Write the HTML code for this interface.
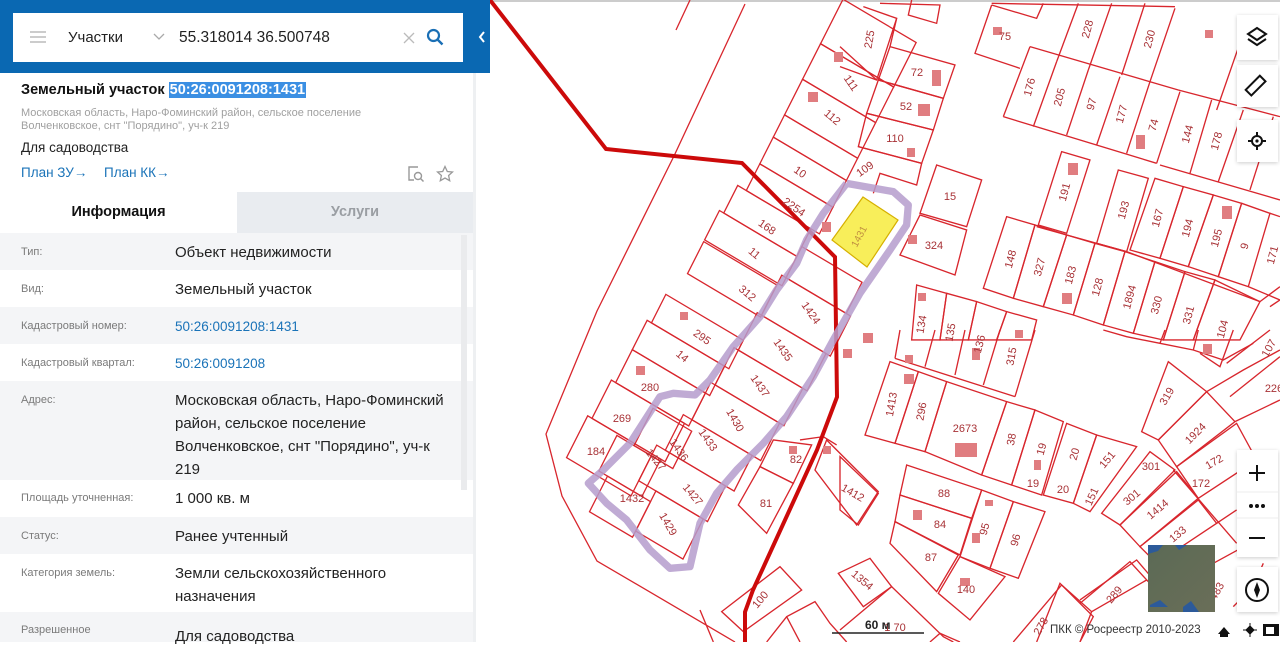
<!DOCTYPE html>
<html><head><meta charset="utf-8"><style>
*{margin:0;padding:0;box-sizing:border-box}
body{width:1280px;height:642px;overflow:hidden;background:#fff;font-family:"Liberation Sans","DejaVu Sans",sans-serif;position:relative}
#map{position:absolute;left:0;top:0;width:1280px;height:642px}
#panel{position:absolute;left:0;top:0;width:476px;height:642px;background:#fff;border-right:3px solid #eef0f2}
#hdr{position:absolute;left:0;top:0;width:490px;height:73px;background:#0a68b2}
#sb{position:absolute;left:13px;top:13px;width:450px;height:49px;background:#fff}
.abs{position:absolute;white-space:nowrap}
.row{position:absolute;left:0;width:473px}
.lab{position:absolute;left:21px;font-size:11px;color:#7a7a7a}
.val{position:absolute;left:175px;font-size:15px;color:#222;line-height:23px}
.g{background:#f4f5f7}
.lnk{color:#1a73b8}
.ctl{position:absolute;left:1237px;width:41px;background:#fff;box-shadow:0 1px 4px rgba(0,0,0,.2)}
</style></head><body>
<svg id="map" viewBox="0 0 1280 642" xmlns="http://www.w3.org/2000/svg">
<rect x="0" y="0" width="1280" height="2" fill="#ccc"/>
<g fill="none" stroke="#d8262d" stroke-width="1.3">
<polyline points="745,4 674,156 597,311 546,434 562,496 597,561 735,642"/>
<polyline points="690,0 676,30"/>
<g transform="translate(840,0) scale(0.3333)" stroke-width="4">
<polyline points="455,15 405,160 540,205"/><polyline points="455,15 590,55 610,10"/>
<polyline points="455,10 1005,20"/>
<line x1="715" y1="10" x2="650" y2="185"/><line x1="815" y1="10" x2="745" y2="210"/><line x1="915" y1="10" x2="845" y2="225"/><line x1="1005" y1="25" x2="930" y2="245"/>
<polyline points="570,140 1015,270 1320,350"/><polyline points="490,350 950,490"/><polyline points="960,495 1320,600"/>
<line x1="570" y1="140" x2="490" y2="350"/><line x1="650" y1="185" x2="580" y2="380"/><line x1="745" y1="210" x2="680" y2="405"/><line x1="840" y1="230" x2="770" y2="435"/><line x1="930" y1="245" x2="860" y2="460"/><line x1="1020" y1="275" x2="950" y2="490"/><line x1="1115" y1="300" x2="1050" y2="520"/><line x1="1210" y1="330" x2="1135" y2="545"/><line x1="1300" y1="350" x2="1230" y2="570"/>
<line x1="1210" y1="100" x2="1130" y2="330"/>
<polygon points="665,455 750,480 680,700 595,675"/>
<polygon points="835,510 925,535 860,755 770,730"/><polygon points="945,535 1030,560 960,775 870,750"/><polygon points="1030,560 1120,585 1045,800 960,775"/><polygon points="1120,585 1205,610 1135,830 1045,800"/><polygon points="1205,610 1290,640 1225,860 1135,830"/><polyline points="1290,640 1320,650"/><polyline points="1320,900 1225,860"/>
<polygon points="500,650 585,675 520,895 430,865"/><polygon points="585,675 680,705 610,920 520,895"/><polygon points="680,705 765,730 700,945 610,920"/><polygon points="765,730 855,755 790,975 700,945"/><polygon points="855,755 945,785 880,1000 790,975"/><polygon points="945,785 1035,815 970,1020 880,1000"/><polygon points="1035,815 1125,840 1060,1020 970,1020"/><polygon points="1125,840 1260,905 1200,1020 1060,1020"/>
<polyline points="590,680 860,755 1260,905"/><polyline points="1260,905 1320,860"/><polyline points="1290,920 1320,900"/>
<polygon points="290,495 425,540 380,680 240,640"/><polygon points="240,645 380,690 345,825 180,765"/>
<polygon points="150,140 345,195 310,295 115,240"/><polygon points="115,240 310,295 280,390 80,340"/><polygon points="80,340 280,390 245,490 55,440"/><polyline points="55,440 245,490 230,555 120,520 100,580"/>
<polyline points="70,20 170,55 110,240 0,200"/><polyline points="170,55 150,140"/><polyline points="0,140 110,240"/><polyline points="120,10 300,15 290,70 205,45 215,0"/>
<polygon points="230,855 320,880 300,1020 215,1020"/><polygon points="320,880 410,905 385,1020 300,1020"/><polygon points="410,905 500,935 470,1020 385,1020"/><polygon points="500,935 590,960 575,1020 470,1020"/>
</g>
<g transform="translate(840,330) scale(0.3333)" stroke-width="4">
<line x1="180" y1="0" x2="165" y2="85"/><line x1="285" y1="0" x2="255" y2="110"/><line x1="375" y1="0" x2="345" y2="135"/><line x1="480" y1="0" x2="430" y2="165"/><line x1="585" y1="0" x2="525" y2="200"/><polyline points="165,85 525,200"/>
<polygon points="150,95 235,125 165,340 75,315"/><polygon points="235,125 320,155 255,365 165,340"/><polygon points="320,155 500,215 425,435 255,365"/><polygon points="500,215 585,240 515,465 425,435"/><polygon points="585,240 670,275 605,495 515,465"/><polygon points="680,280 770,315 700,520 610,495"/><polygon points="770,315 890,350 750,545 700,520"/>
<polygon points="200,405 425,480 395,565 180,495"/><polygon points="180,495 395,565 360,675 165,575"/><polygon points="165,575 355,675 290,785 150,640"/><polygon points="425,480 520,515 450,715 360,680"/><polygon points="520,515 615,545 535,745 450,715"/><polygon points="360,680 495,740 390,870 295,790"/>
<polygon points="0,380 115,490 55,585 0,540"/>
<polygon points="985,95 1100,185 955,330 905,305"/><polygon points="955,330 1100,185 1185,275 1010,410"/><polygon points="930,365 1005,420 840,585 785,550"/><polygon points="840,585 1010,425 1075,505 900,650"/><polygon points="900,650 1075,510 1130,580 950,700"/><polygon points="1010,410 1190,280 1250,390 1075,505"/><polyline points="1100,185 1210,120 1320,60"/><polyline points="1160,100 1290,0"/><polyline points="1170,200 1320,80"/><polyline points="1185,275 1320,210"/><polyline points="1000,420 1190,640"/><polyline points="1130,580 1190,540"/>
<polyline points="790,0 860,20 960,40 1060,60 1150,90 1240,40"/><polyline points="960,40 975,0"/><polyline points="1060,60 1075,0"/><polyline points="1080,70 1140,110 1180,0"/>
<polyline points="1270,700 1240,770"/><polyline points="1120,700 1230,640"/><polyline points="1180,830 1230,780"/>
<polyline points="720,810 890,690 950,760"/><polyline points="590,936 660,760 760,860 720,936"/>
</g>
<g transform="translate(700,540) scale(0.3333)" stroke-width="4">
<polygon points="65,215 240,80 305,150 130,275"/><polygon points="415,100 510,55 575,140 490,200"/><polyline points="420,270 575,140 730,290 760,306"/><polyline points="200,306 260,230 345,185 390,250 440,306"/><polyline points="260,230 300,306"/><polyline points="0,210 40,306"/><polyline points="940,306 1085,135 1175,215 1140,306"/><polyline points="1140,190 1290,65 1345,125"/><polyline points="1175,215 1340,120"/><polyline points="690,306 720,280 780,306"/>
</g>
<g transform="matrix(0.86,0.51,-0.45,0.89,742,188)" stroke-width="1.3">
<rect x="5" y="-215" width="85" height="50"/><rect x="5" y="-165" width="85" height="40"/><rect x="5" y="-125" width="85" height="40"/><rect x="5" y="-85" width="85" height="25"/><rect x="5" y="-60" width="85" height="30"/><rect x="5" y="-30" width="85" height="30"/>
<rect x="-5" y="0" width="85" height="31"/><rect x="-10" y="31" width="90" height="33"/><rect x="-10" y="66" width="85" height="36"/>
<rect x="-20" y="131" width="90" height="32"/><rect x="-25" y="163" width="90" height="33"/><rect x="-25" y="196" width="85" height="37"/><rect x="-30" y="233" width="85" height="43"/><rect x="-35" y="276" width="75" height="47"/>
<rect x="80" y="20" width="70" height="35"/><rect x="75" y="55" width="80" height="45"/><rect x="70" y="100" width="80" height="42"/><rect x="65" y="142" width="80" height="42"/><rect x="60" y="184" width="80" height="42"/><rect x="50" y="226" width="80" height="40"/>
<rect x="20" y="236" width="45" height="42"/><rect x="40" y="266" width="80" height="40"/><rect x="0" y="278" width="50" height="40"/><rect x="10" y="318" width="50" height="40"/><rect x="60" y="306" width="55" height="45"/>
</g>
<g transform="translate(560,150) scale(0.3333)" stroke-width="4">
<polygon points="640,870 755,885 700,1000 600,950"/><polygon points="600,950 700,1000 620,1150 535,1065"/><polygon points="765,960 800,870 955,1025 890,1125"/><polyline points="720,870 790,860 830,885"/>
</g>
</g>
<g fill="#e07d80">
<rect x="834" y="52" width="9" height="10"/><rect x="808" y="92" width="10" height="10"/><rect x="932" y="70" width="9" height="16"/><rect x="918" y="104" width="12" height="12"/><rect x="907" y="148" width="8" height="9"/><rect x="993" y="27" width="9" height="8"/><rect x="1068" y="163" width="10" height="12"/><rect x="1222" y="206" width="10" height="13"/><rect x="1062" y="293" width="10" height="11"/><rect x="1203" y="344" width="9" height="10"/><rect x="1136" y="135" width="9" height="14"/>
<rect x="822" y="222" width="9" height="10"/><rect x="908" y="235" width="9" height="9"/><rect x="863" y="333" width="10" height="10"/><rect x="843" y="349" width="9" height="9"/><rect x="680" y="312" width="8" height="8"/><rect x="636" y="366" width="9" height="9"/>
<rect x="918" y="293" width="8" height="8"/><rect x="905" y="355" width="8" height="8"/><rect x="904" y="374" width="10" height="10"/><rect x="972" y="348" width="8" height="12"/><rect x="1015" y="330" width="8" height="8"/><rect x="955" y="443" width="22" height="14"/><rect x="1034" y="460" width="7" height="10"/><rect x="913" y="510" width="9" height="10"/><rect x="972" y="533" width="8" height="10"/><rect x="985" y="500" width="8" height="6"/><rect x="789" y="446" width="8" height="8"/><rect x="823" y="446" width="8" height="8"/><rect x="960" y="578" width="10" height="8"/><rect x="1205" y="30" width="8" height="8"/>
</g>
<polyline points="490,0 606,149 742,163 835,257 837,397 817,450 753,590 745,612 745,642" fill="none" stroke="#cc0a0a" stroke-width="4"/>
<g transform="translate(560,150) scale(0.3333)">
<polyline points="860,100 1000,125 1045,165 1040,225 990,300 900,430 820,570 760,680 680,800 610,880 530,960 470,1030 420,1120 390,1250 330,1255 270,1200 200,1110 140,1060 85,1000 130,960 210,880 300,740 340,730 405,735 450,690 520,590 600,500 650,420 710,340 740,270 790,190 860,100" fill="none" stroke="#b59ccc" stroke-opacity="0.85" stroke-width="22" stroke-linejoin="round"/>
</g>
<polygon points="863,197 898,220 867,267 832,240" fill="#f8ee5a" stroke="#d6b000" stroke-width="1.2"/>
<text x="0" y="0" transform="translate(862,238) rotate(-62)" font-size="10" fill="#c09040" text-anchor="middle">1431</text>
<g font-size="11" fill="#a83236" font-family="Liberation Sans,sans-serif" text-anchor="middle">
<text transform="translate(873,40) rotate(-80)">225</text><text transform="translate(848,85) rotate(55)">111</text><text transform="translate(830,120) rotate(40)">112</text><text transform="translate(798,175) rotate(35)">10</text><text transform="translate(792,210) rotate(35)">2254</text>
<text x="917" y="76">72</text><text x="906" y="110">52</text><text x="895" y="142">110</text><text transform="translate(867,172) rotate(-35)">109</text>
<text x="950" y="200">15</text><text x="934" y="249">324</text><text x="1005" y="40">75</text>
<text transform="translate(1091,30) rotate(-75)">228</text><text transform="translate(1153,40) rotate(-75)">230</text>
<text transform="translate(1033,88) rotate(-75)">176</text><text transform="translate(1063,98) rotate(-75)">205</text><text transform="translate(1095,105) rotate(-75)">97</text><text transform="translate(1125,115) rotate(-75)">177</text><text transform="translate(1157,126) rotate(-75)">74</text><text transform="translate(1191,135) rotate(-75)">144</text><text transform="translate(1220,142) rotate(-75)">178</text>
<text transform="translate(1068,193) rotate(-75)">191</text><text transform="translate(1127,211) rotate(-75)">193</text><text transform="translate(1161,219) rotate(-75)">167</text><text transform="translate(1191,229) rotate(-75)">194</text><text transform="translate(1220,239) rotate(-75)">195</text><text transform="translate(1248,247) rotate(-75)">9</text><text transform="translate(1276,256) rotate(-75)">171</text>
<text transform="translate(1014,260) rotate(-75)">148</text><text transform="translate(1043,268) rotate(-75)">327</text><text transform="translate(1074,276) rotate(-75)">183</text><text transform="translate(1101,288) rotate(-75)">128</text><text transform="translate(1133,298) rotate(-75)">1894</text><text transform="translate(1160,306) rotate(-75)">330</text><text transform="translate(1192,316) rotate(-75)">331</text><text transform="translate(1226,330) rotate(-75)">104</text><text transform="translate(1272,350) rotate(-60)">107</text>
<text transform="translate(925,325) rotate(-80)">134</text><text transform="translate(954,333) rotate(-80)">135</text><text transform="translate(983,345) rotate(-75)">136</text><text transform="translate(1015,357) rotate(-80)">315</text>
<text transform="translate(895,405) rotate(-80)">1413</text><text transform="translate(925,412) rotate(-80)">296</text><text x="965" y="432">2673</text><text transform="translate(1015,440) rotate(-80)">38</text><text transform="translate(1045,450) rotate(-75)">19</text><text x="1033" y="487">19</text><text transform="translate(1078,455) rotate(-75)">20</text><text x="1063" y="493">20</text><text transform="translate(1110,462) rotate(-50)">151</text><text transform="translate(1095,498) rotate(-65)">151</text>
<text x="944" y="497">88</text><text x="940" y="528">84</text><text transform="translate(988,530) rotate(-75)">95</text><text transform="translate(1019,541) rotate(-75)">96</text><text x="931" y="561">87</text><text x="966" y="593">140</text>
<text transform="translate(1170,398) rotate(-60)">319</text><text transform="translate(1198,436) rotate(-45)">1924</text><text x="1151" y="470">301</text><text transform="translate(1134,500) rotate(-40)">301</text><text transform="translate(1160,512) rotate(-40)">1414</text><text transform="translate(1180,537) rotate(-40)">133</text><text transform="translate(1216,465) rotate(-30)">172</text><text x="1201" y="487">172</text><text x="1274" y="392">226</text><text transform="translate(1220,593) rotate(-60)">483</text><text transform="translate(1117,597) rotate(-50)">289</text><text transform="translate(1044,628) rotate(-60)">278</text>
<text transform="translate(765,230) rotate(35)">168</text><text transform="translate(752,256) rotate(40)">11</text><text transform="translate(745,296) rotate(40)">312</text><text transform="translate(700,340) rotate(35)">295</text><text transform="translate(680,359) rotate(40)">14</text><text x="650" y="391">280</text><text x="622" y="422">269</text><text x="596" y="455">184</text>
<text transform="translate(808,315) rotate(55)">1424</text><text transform="translate(780,352) rotate(55)">1435</text><text transform="translate(757,388) rotate(55)">1437</text><text transform="translate(732,422) rotate(60)">1430</text><text transform="translate(705,442) rotate(55)">1433</text><text transform="translate(676,452) rotate(55)">1436</text><text transform="translate(653,462) rotate(50)">1427</text><text transform="translate(690,497) rotate(50)">1427</text><text x="632" y="502">1432</text><text transform="translate(665,526) rotate(60)">1429</text>
<text x="796" y="463">82</text><text x="766" y="507">81</text><text transform="translate(851,496) rotate(30)">1412</text><text transform="translate(860,583) rotate(40)">1354</text><text transform="translate(763,602) rotate(-50)">100</text><text x="895" y="631">1 70</text>
</g>
<line x1="832" y1="633" x2="924" y2="633" stroke="#222" stroke-width="1.5"/>
<text x="865" y="629" font-size="12" font-weight="bold" fill="#222" font-family="Liberation Sans,sans-serif">60 м</text>
<text x="1050" y="633" font-size="11.5" fill="#333" font-family="Liberation Sans,sans-serif">ПКК © Росреестр 2010-2023</text>
<path d="M1218 634 L1224 627 L1230 634 L1228 634 L1228 637 L1220 637 L1220 634 Z" fill="#111"/>
<path d="M1246 630 l4 -4 l4 4 l-4 4 z M1250 623 v14 M1243 630 h14" stroke="#111" fill="#111" stroke-width="1"/>
<rect x="1263" y="624" width="16" height="12" fill="#111"/><rect x="1266" y="627" width="8" height="7" fill="#fff"/>
<defs><linearGradient id="sat" x1="0" y1="0" x2="1" y2="1"><stop offset="0" stop-color="#5b6a55"/><stop offset="1" stop-color="#6a6e58"/></linearGradient></defs>
<rect x="1148" y="545" width="67" height="67" fill="url(#sat)"/>
<path d="M1148 545 h15 l-5 6 l-10 3z M1175 545 h12 l-8 5z M1150 605 l10 -5 l8 7 h-18z M1183 607 l8 -6 l8 11 h-16z" fill="#2c5a9a"/>
</svg>
<div class="ctl" style="top:15px;height:45px"><svg width="41" height="45" viewBox="0 0 41 45"><path d="M20 13 l9 6 l-9 6 l-9 -6 z" fill="none" stroke="#111" stroke-width="2"/><path d="M11 24 l9 6 l9 -6" fill="none" stroke="#111" stroke-width="2"/></svg></div>
<div class="ctl" style="top:65px;height:42px"><svg width="41" height="42" viewBox="0 0 41 42"><rect x="14" y="12" width="8" height="20" transform="rotate(45 20 22)" fill="none" stroke="#111" stroke-width="2"/></svg></div>
<div class="ctl" style="top:120px;height:42px"><svg width="41" height="42" viewBox="0 0 41 42"><circle cx="20" cy="21" r="5" fill="none" stroke="#111" stroke-width="2"/><circle cx="20" cy="21" r="1.6" fill="#111"/><path d="M20 12v4M20 26v4M11 21h4M25 21h4" stroke="#111" stroke-width="2"/></svg></div>
<div class="ctl" style="top:450px;height:107px">
<svg width="41" height="107" viewBox="0 0 41 107"><path d="M20 15v16M12 23h16" stroke="#111" stroke-width="2"/><line x1="0" y1="42" x2="41" y2="42" stroke="#eee"/><circle cx="14" cy="56" r="2" fill="#111"/><circle cx="20" cy="56" r="2" fill="#111"/><circle cx="26" cy="56" r="2" fill="#111"/><line x1="0" y1="68" x2="41" y2="68" stroke="#eee"/><path d="M12 88h16" stroke="#111" stroke-width="2"/></svg></div>
<div class="ctl" style="top:567px;height:45px"><svg width="41" height="45" viewBox="0 0 41 45"><circle cx="20" cy="23" r="11" fill="none" stroke="#111" stroke-width="2"/><path d="M20 15 l3 8 l-3 8 l-3 -8z" fill="#111"/></svg></div>

<div id="panel">
<div id="hdr">
 <div id="sb">
  <div class="abs" style="left:17px;top:18px;width:16px;height:2px;background:#ccc;box-shadow:0 5px 0 #ccc,0 10px 0 #ccc"></div>
  <div class="abs" style="left:55px;top:16px;font-size:15px;color:#222">Участки</div>
  <svg class="abs" style="left:140px;top:20px" width="12" height="8"><path d="M1 1l5 5l5-5" fill="none" stroke="#aaa" stroke-width="1.3"/></svg>
  <div class="abs" style="left:166px;top:16px;font-size:15.5px;color:#222">55.318014 36.500748</div>
  <svg class="abs" style="left:390px;top:19px" width="12" height="12"><path d="M1 1l10 10M11 1L1 11" stroke="#bbb" stroke-width="1.3"/></svg>
  <svg class="abs" style="left:413px;top:15px" width="18" height="18"><circle cx="7.5" cy="7.5" r="5.5" fill="none" stroke="#1a6fb5" stroke-width="2.2"/><path d="M11.5 11.5l5 5" stroke="#1a6fb5" stroke-width="2.4"/></svg>
 </div>
 <svg class="abs" style="left:478px;top:31px" width="8" height="12"><path d="M6 1L2 6l4 5" fill="none" stroke="#fff" stroke-width="2"/></svg>
</div>
<div class="abs" style="left:21px;top:82px;font-size:14.5px;font-weight:bold;color:#111">Земельный участок <span style="background:#3b8fe3;color:#fff;padding:0 1px">50:26:0091208:1431</span></div>
<div class="abs" style="left:21px;top:107px;font-size:11px;color:#a0a0a0;line-height:13px">Московская область, Наро-Фоминский район, сельское поселение<br>Волченковское, снт "Порядино", уч-к 219</div>
<div class="abs" style="left:21px;top:140px;font-size:13.5px;color:#222">Для садоводства</div>
<div class="abs lnk" style="left:21px;top:165px;font-size:13.5px">План ЗУ→</div>
<div class="abs lnk" style="left:104px;top:165px;font-size:13.5px">План КК→</div>
<svg class="abs" style="left:407px;top:165px" width="18" height="18"><path d="M11 2H2v13h5" fill="none" stroke="#999" stroke-width="1.4"/><circle cx="11" cy="11" r="3.5" fill="none" stroke="#999" stroke-width="1.4"/><path d="M13.5 13.5l3 3" stroke="#999" stroke-width="1.5"/></svg>
<svg class="abs" style="left:436px;top:165px" width="18" height="18"><path d="M9 1.5l2.3 5 5.2.5-3.9 3.5 1.1 5.2L9 13l-4.7 2.7 1.1-5.2L1.5 7l5.2-.5z" fill="none" stroke="#999" stroke-width="1.3"/></svg>
<div class="abs" style="left:0;top:192px;width:237px;height:41px;background:#fff;text-align:center;font-size:14.5px;font-weight:bold;line-height:41px;color:#111">Информация</div>
<div class="abs" style="left:237px;top:192px;width:236px;height:41px;background:#e9ecf0;text-align:center;font-size:14.5px;font-weight:bold;line-height:41px;color:#9a9ea3">Услуги</div>
<div class="row g" style="top:233px;height:37px"><div class="lab" style="top:13px">Тип:</div><div class="val" style="top:8px">Объект недвижимости</div></div>
<div class="row" style="top:270px;height:37px"><div class="lab" style="top:13px">Вид:</div><div class="val" style="top:8px">Земельный участок</div></div>
<div class="row g" style="top:307px;height:37px"><div class="lab" style="top:13px">Кадастровый номер:</div><div class="val lnk" style="top:8px;font-size:13.5px">50:26:0091208:1431</div></div>
<div class="row" style="top:344px;height:37px"><div class="lab" style="top:13px">Кадастровый квартал:</div><div class="val lnk" style="top:8px;font-size:13.5px">50:26:0091208</div></div>
<div class="row g" style="top:381px;height:99px"><div class="lab" style="top:13px">Адрес:</div><div class="val" style="top:8px;white-space:normal;width:280px">Московская область, Наро-Фоминский район, сельское поселение Волченковское, снт "Порядино", уч-к 219</div></div>
<div class="row" style="top:480px;height:37px"><div class="lab" style="top:12px">Площадь уточненная:</div><div class="val" style="top:7px">1 000 кв. м</div></div>
<div class="row g" style="top:517px;height:37px"><div class="lab" style="top:13px">Статус:</div><div class="val" style="top:8px">Ранее учтенный</div></div>
<div class="row" style="top:554px;height:58px"><div class="lab" style="top:13px">Категория земель:</div><div class="val" style="top:8px;white-space:normal;width:290px">Земли сельскохозяйственного назначения</div></div>
<div class="row g" style="top:612px;height:30px"><div class="lab" style="top:12px">Разрешенное</div><div class="val" style="top:13px">Для садоводства</div></div>
<div class="abs" style="left:461px;top:235px;width:6px;height:255px;background:#eaebed"></div>
</div>
</body></html>
